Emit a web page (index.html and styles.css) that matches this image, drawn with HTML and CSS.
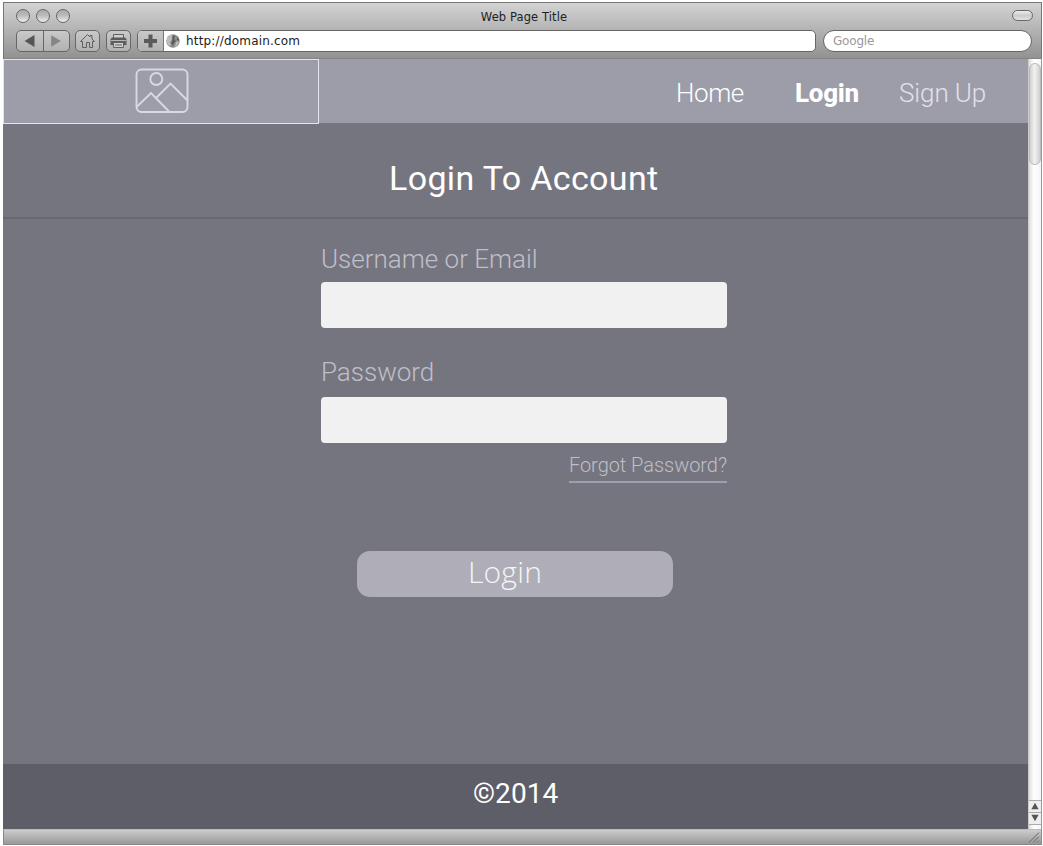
FILE: index.html
```html
<!DOCTYPE html>
<html lang="en">
<head>
<meta charset="utf-8">
<title>Web Page Title</title>
<link rel="stylesheet" href="styles.css">
</head>
<body>
<div class="window">
  <header class="chrome">
    <div class="titlebar">
      <div class="lights"><i class="light"></i><i class="light"></i><i class="light"></i></div>
      <span class="window-title">Web Page Title</span>
      <i class="pill"></i>
    </div>
    <div class="toolbar">
      <div class="btn pair">
        <svg width="26" height="20" viewBox="0 0 26 20"><path d="M17.500 4v12L7.500 10z" fill="#555"/></svg>
        <svg class="forward" width="26" height="20" viewBox="0 0 26 20"><path d="M7.500 4v12L17.500 10z" fill="#858585"/></svg>
      </div>
      <div class="btn home">
        <svg width="23" height="20" viewBox="0 0 23 20" fill="none" stroke="#606060"><path d="M4.500 10.500 11.500 3.500l2.500 2.500V4.500h2v3.500l2.500 2.500h-2V16.500h-3v-5h-3v5h-4v-6z"/></svg>
      </div>
      <div class="btn print">
        <svg width="23" height="20" viewBox="0 0 23 20"><path d="M6.500 7V3.500h10V7" fill="#d0d0d0" stroke="#606060"/><path d="M5 6.500h13l1.500 1.500v6h-16V8z" fill="#5c5c5c"/><path d="M4 9.500h15" stroke="#b5b5b5"/><path d="M6.500 11.500h10v5h-10z" fill="#d0d0d0" stroke="#606060"/><path d="M8 14h7" stroke="#606060"/></svg>
      </div>
      <div class="address">
        <span class="add"><svg width="25" height="20" viewBox="0 0 25 20"><path d="M6 10h13M12.500 3.500v13" stroke="#5a5a5a" stroke-width="4"/></svg></span>
        <svg class="globe" width="14" height="14" viewBox="0 0 14 14"><circle cx="7" cy="7" r="6.700" fill="#8c8c8c"/><path d="M1 4 4 1l3-.5L5.500 3 6 6 4 8l1 3-2 1-2-3zM10 8l3-.5-2 4-2 1.500z" fill="#bcbcbc"/><path d="M7 1 9 2.500 8 5l2 2-2 2-1 3-2-3 1-2zM11 3l2 2v2l-2-1z" fill="#5c5c5c"/></svg>
        <span class="url">http://domain.com</span>
      </div>
      <div class="search">Google</div>
    </div>
  </header>
  <div class="viewport">
    <div class="page">
      <nav class="nav">
        <div class="logo">
          <svg width="54" height="46" viewBox="0 0 54 46" fill="none" stroke="#d9d9e2" stroke-width="1.900"><rect x="1.500" y="1.500" width="51" height="42.500" rx="5"/><circle cx="21.300" cy="11" r="6"/><path d="M1.500 39 16 25 34.500 44M21 30 35.500 15.500 52.500 32.500"/></svg>
        </div>
        <a class="nav-item nav-home">Home</a>
        <a class="nav-item nav-login">Login</a>
        <a class="nav-item nav-signup">Sign Up</a>
      </nav>
      <h1 class="heading"><span>Login To Account</span></h1>
      <form class="form">
        <label class="label user" for="u">Username or Email</label>
        <input class="field" id="u" type="text">
        <label class="label pass" for="p">Password</label>
        <input class="field" id="p" type="password">
        <a class="forgot">Forgot Password?</a>
        <button class="submit" type="button"><span>Login</span></button>
      </form>
      <footer class="footer"><span>©2014</span></footer>
    </div>
    <div class="scrollbar">
      <i class="thumb"></i>
      <svg class="arrow" width="12" height="12" viewBox="0 0 12 12"><path d="M6 2 10 9H2z" fill="#555"/></svg>
      <svg class="arrow" width="12" height="12" viewBox="0 0 12 12"><path d="M2 2h8L6 9z" fill="#555"/></svg>
    </div>
  </div>
  <div class="statusbar"><svg width="13" height="14" viewBox="0 0 13 14"><path d="M1 12.500 11 2.500M5 12.500l6-6M9 12.500l2-2" stroke="#666"/></svg></div>
</div>
</body>
</html>
```
FILE: styles.css
```css
* { box-sizing: border-box; }
body { margin: 0; background: #fff; font-family: Roboto, sans-serif; }
svg { display: block; flex: none; }
i { display: block; }
.window { width: 1039px; height: 843px; margin: 2px 0 0 3px; display: flex; flex-direction: column; }
.chrome { height: 57px; border: 1px solid #777; border-bottom-color: #858585; background: linear-gradient(#d3d3d3, #929292); font-family: "DejaVu Sans", sans-serif; color: #222; }
.titlebar { height: 25px; display: flex; align-items: center; justify-content: space-between; padding: 0 8px 0 12px; }
.lights { display: flex; gap: 6px; width: 60px; }
.light { width: 14px; height: 14px; border: 1px solid #666; border-radius: 50%; background: linear-gradient(#aaa, #bbb 45%, #eee); }
.window-title { font-size: 11.500px; letter-spacing: .1px; padding-top: 2px; margin-right: 40px; white-space: nowrap; }
.pill { width: 21px; height: 11px; border: 1px solid #666; border-radius: 6px; background: linear-gradient(#eee, #ccc 50%, #e2e2e2); }
.toolbar { display: flex; margin: 2px 0 0 12px; height: 22px; }
.btn { display: flex; height: 22px; border: 1px solid #666; border-radius: 5px; background: linear-gradient(#c9c9c9, #b1b1b1); }
.pair { width: 54px; margin-right: 5px; }
.forward { border-left: 1px solid #666; }
.home { width: 25px; margin-right: 6px; }
.print { width: 25px; margin-right: 6px; }
.address { width: 679px; display: flex; align-items: center; border: 1px solid #666; border-radius: 5px; background: #fff; overflow: hidden; }
.add { width: 26px; height: 20px; background: linear-gradient(#c9c9c9, #b1b1b1); border-right: 1px solid #777; }
.globe { margin: 0 6px 0 2px; }
.url { font-size: 12px; letter-spacing: .18px; }
.search { margin-left: 7px; width: 209px; border: 1px solid #666; border-radius: 11px; background: #fff; padding-left: 9px; font-size: 12px; letter-spacing: -.2px; line-height: 20px; color: #999; }
.viewport { height: 770px; display: flex; }
.page { width: 1025px; display: flex; flex-direction: column; background: #75757f; }
.nav { height: 64px; display: flex; background: #9d9ca9; }
.logo { width: 316px; height: 65px; flex: none; border: 1px solid #e4e4eb; padding: 8px 0 0 131px; z-index: 1; }
.nav-item { font-size: 26px; line-height: 68px; height: 64px; color: #fff; white-space: nowrap; letter-spacing: -.4px; }
.nav-home { font-weight: 300; width: 119px; margin-left: 357px; }
.nav-login { font-weight: 800; width: 104px; letter-spacing: -.3px; }
.nav-signup { font-weight: 300; color: #e2e2e8; letter-spacing: -.1px; }
.heading { height: 96px; margin: 0; border-bottom: 2px solid #686872; padding-left: 386px; color: #fff; font-size: 34px; font-weight: 400; line-height: 111px; letter-spacing: .35px; white-space: nowrap; }
.form { display: flex; flex-direction: column; width: 406px; height: 545px; margin-left: 318px; flex: none; }
.label { font-size: 26px; line-height: 30px; height: 30px; font-weight: 300; color: #bfbfc9; white-space: nowrap; }
.user { margin: 25px 0 8px; }
.pass { margin: 29px 0 10px; }
.field { width: 406px; height: 46px; flex: none; border: 0; border-radius: 4px; background: #f1f1f1; padding: 0 12px; font: 300 22px Roboto, sans-serif; outline: none; }
.forgot { align-self: flex-end; margin-top: 9px; height: 31px; border-bottom: 2px solid #a09fac; font-size: 20px; letter-spacing: -.04px; line-height: 26px; font-weight: 300; color: #bfbfc9; white-space: nowrap; }
.submit { width: 316px; height: 46px; margin: 68px 0 0 36px; padding: 0 0 4px 111px; border: 0; border-radius: 13px; background: #afaeb8; color: #f5f5f5; font: 350 30px/42px "Open Sans", sans-serif; letter-spacing: .2px; text-align: left; display: block; flex: none; }
.footer { height: 65px; background: #5e5e68; color: #fff; font-size: 28px; line-height: 59px; padding-left: 470px; letter-spacing: .1px; }
.scrollbar { width: 14px; padding-top: 4px; display: flex; flex-direction: column; background: linear-gradient(90deg, #ddd, #fff 40%, #f5f5f5); border-left: 1px solid #ccc; border-right: 1px solid #999; }
.thumb { height: 102px; margin-bottom: auto; border: 1px solid #bbb; border-radius: 6px; background: linear-gradient(90deg, #cfcfcf, #f2f2f2 45%, #cfcfcf); }
.arrow { height: 12px; border-top: 1px solid #aaa; background: #eee; }
.arrow:last-child { height: 13px; border-bottom: 1px solid #aaa; margin-bottom: 4px; }
.statusbar { height: 16px; display: flex; justify-content: flex-end; border: 1px solid #888; border-top-color: #bbb; background: linear-gradient(#ccc, #999); }
```
